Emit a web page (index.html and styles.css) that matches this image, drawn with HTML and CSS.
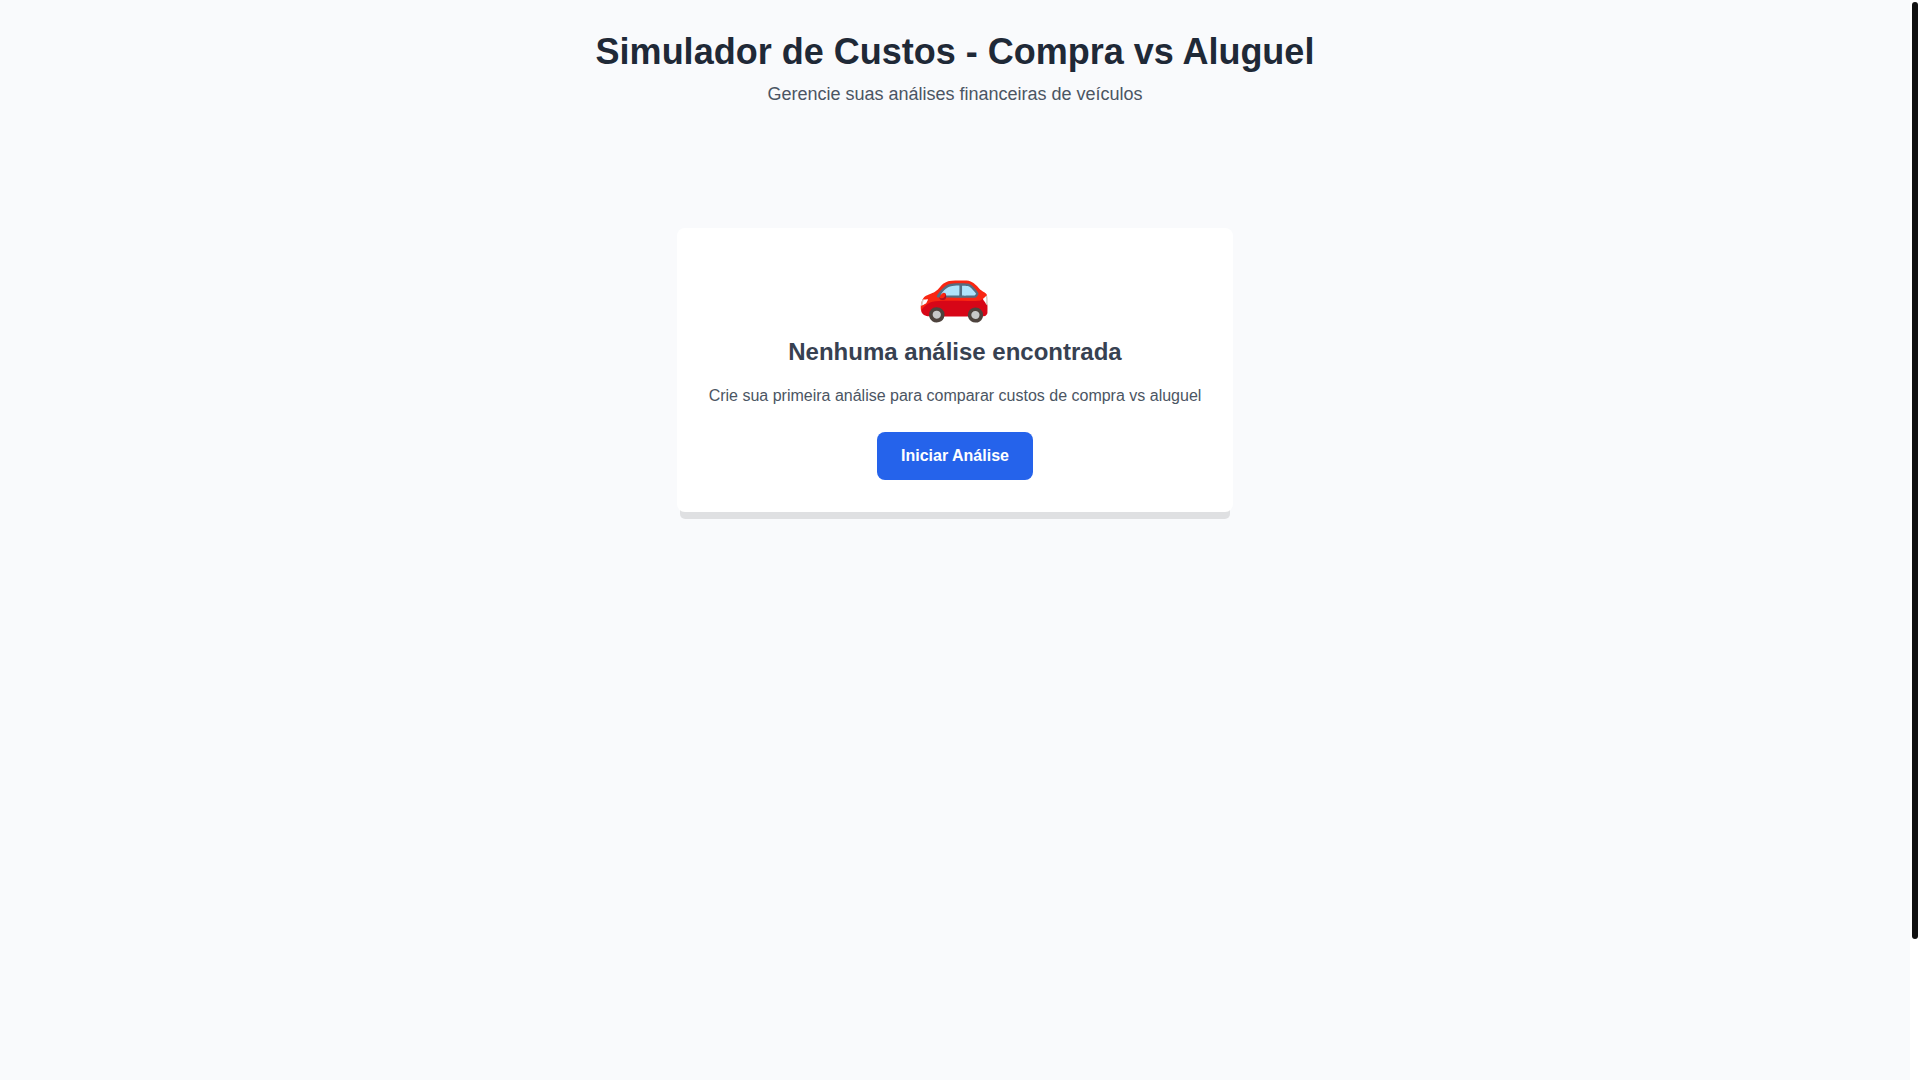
FILE: index.html
```html
<!DOCTYPE html>
<html lang="pt-BR">
<head>
<meta charset="utf-8">
<meta name="viewport" content="width=device-width, initial-scale=1">
<title>Simulador de Custos - Compra vs Aluguel</title>
<link rel="stylesheet" href="styles.css">
</head>
<body>
<div class="page">
  <header class="header">
    <h1 class="title">Simulador de Custos - Compra vs Aluguel</h1>
    <p class="subtitle">Gerencie suas análises financeiras de veículos</p>
  </header>
  <main class="content">
    <section class="card">
      <div class="card-icon">🚗</div>
      <h2 class="card-title">Nenhuma análise encontrada</h2>
      <p class="card-text">Crie sua primeira análise para comparar custos de compra vs aluguel</p>
      <button class="button" type="button">Iniciar Análise</button>
    </section>
  </main>
</div>
<div class="scroll-track" aria-hidden="true">
  <div class="scroll-thumb"></div>
</div>
</body>
</html>
```

FILE: styles.css
```css
* {
  box-sizing: border-box;
  margin: 0;
}

body {
  display: flex;
  min-height: 100vh;
  background: #f9fafc;
  color: #1f2937;
  font-family: "Liberation Sans", Arial, sans-serif;
  font-size: 16px;
  line-height: 24px;
}

.page {
  flex: 1;
  padding: 32px 16px;
}

.scroll-track {
  width: 10px;
  padding: 2px;
  background: #fff;
}

.scroll-thumb {
  height: 86.8vh;
  border-radius: 3px;
  background: #111;
}

.header {
  text-align: center;
}

.title {
  margin-bottom: 8px;
  font-size: 36px;
  line-height: 40px;
}

.subtitle {
  color: #4b5563;
  font-size: 18px;
  line-height: 28px;
}

.content {
  display: flex;
  justify-content: center;
  padding-top: 120px;
}

.card {
  padding: 32px;
  border-radius: 8px;
  background: #fff;
  box-shadow: 0 10px 0 -3px rgba(0, 0, 0, 0.1);
  text-align: center;
}

.card-icon {
  margin-bottom: 16px;
  font-size: 60px;
  line-height: 60px;
}

.card-title {
  margin-bottom: 16px;
  color: #374151;
  font-size: 24px;
  line-height: 32px;
}

.card-text {
  margin-bottom: 24px;
  color: #4b5563;
  text-rendering: optimizeLegibility;
}

.button {
  padding: 12px 24px;
  border: 0;
  border-radius: 8px;
  background: #2563eb;
  color: #fff;
  font: inherit;
  font-weight: 600;
  text-rendering: optimizeLegibility;
  cursor: pointer;
}
```
